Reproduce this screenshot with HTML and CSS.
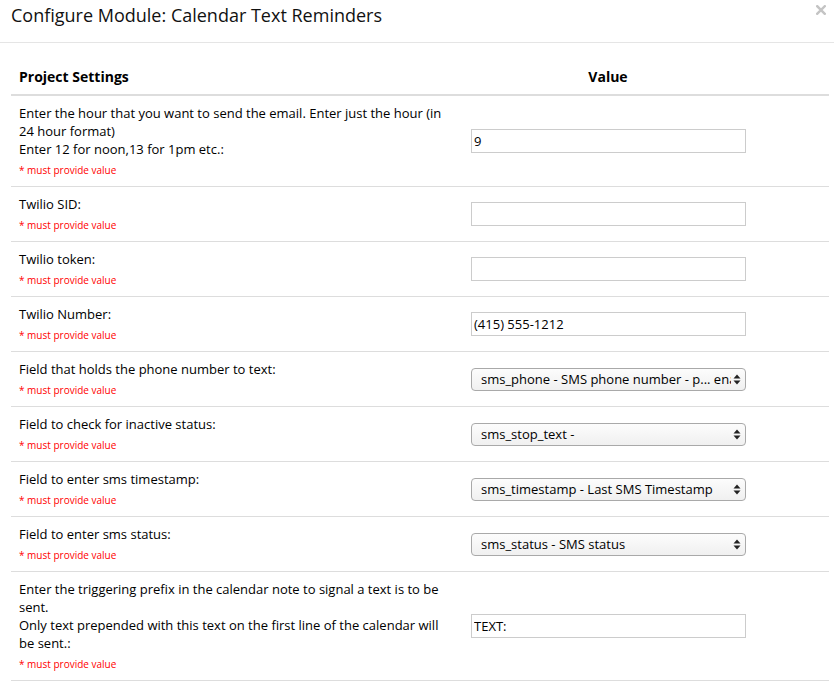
FILE: index.html
```html
<!DOCTYPE html>
<html>
<head>
<meta charset="utf-8">
<link rel="stylesheet" href="styles.css">
</head>
<body>
<div class="modal">
  <div class="modal-header">
    <h4 class="title">Configure Module: Calendar Text Reminders</h4>
    <svg class="close" width="10" height="10" viewBox="0 0 10 10"><path d="M1.2 1.2 L8.8 8.8 M8.8 1.2 L1.2 8.8" stroke="#c4c4c4" stroke-width="2.4" stroke-linecap="square"/></svg>
  </div>
  <div class="modal-body">
    <div class="settings">
      <div class="th">Project Settings</div>
      <div class="th th-value">Value</div>

      <div class="cell label">Enter the hour that you want to send the email. Enter just the hour (in 24 hour format)<br>Enter 12 for noon,13 for 1pm etc.:<div class="req">* must provide value</div></div>
      <div class="cell value"><input class="text" type="text" value="9"></div>

      <div class="cell label">Twilio SID:<div class="req">* must provide value</div></div>
      <div class="cell value"><input class="text" type="text" value=""></div>

      <div class="cell label">Twilio token:<div class="req">* must provide value</div></div>
      <div class="cell value"><input class="text" type="text" value=""></div>

      <div class="cell label">Twilio Number:<div class="req">* must provide value</div></div>
      <div class="cell value"><input class="text" type="text" value="(415) 555-1212"></div>

      <div class="cell label">Field that holds the phone number to text:<div class="req">* must provide value</div></div>
      <div class="cell value"><span class="sel"><select><option>sms_phone - SMS phone number - p... enabled</option></select><svg class="arrows" width="8" height="11" viewBox="0 0 8 11"><path d="M4 0.5 L7.5 4.5 L0.5 4.5 Z M0.5 6.5 L7.5 6.5 L4 10.5 Z" fill="#222"/></svg></span></div>

      <div class="cell label">Field to check for inactive status:<div class="req">* must provide value</div></div>
      <div class="cell value"><span class="sel"><select><option>sms_stop_text - </option></select><svg class="arrows" width="8" height="11" viewBox="0 0 8 11"><path d="M4 0.5 L7.5 4.5 L0.5 4.5 Z M0.5 6.5 L7.5 6.5 L4 10.5 Z" fill="#222"/></svg></span></div>

      <div class="cell label">Field to enter sms timestamp:<div class="req">* must provide value</div></div>
      <div class="cell value"><span class="sel"><select><option>sms_timestamp - Last SMS Timestamp</option></select><svg class="arrows" width="8" height="11" viewBox="0 0 8 11"><path d="M4 0.5 L7.5 4.5 L0.5 4.5 Z M0.5 6.5 L7.5 6.5 L4 10.5 Z" fill="#222"/></svg></span></div>

      <div class="cell label">Field to enter sms status:<div class="req">* must provide value</div></div>
      <div class="cell value"><span class="sel"><select><option>sms_status - SMS status</option></select><svg class="arrows" width="8" height="11" viewBox="0 0 8 11"><path d="M4 0.5 L7.5 4.5 L0.5 4.5 Z M0.5 6.5 L7.5 6.5 L4 10.5 Z" fill="#222"/></svg></span></div>

      <div class="cell label">Enter the triggering prefix in the calendar note to signal a text is to be sent.<br>Only text prepended with this text on the first line of the calendar will be sent.:<div class="req">* must provide value</div></div>
      <div class="cell value"><input class="text" type="text" value="TEXT:"></div>
    </div>
  </div>
</div>
</body>
</html>
```

FILE: styles.css
```css
* { box-sizing: border-box; }
html, body {
  margin: 0;
  padding: 0;
  background: #fff;
}
body {
  font-family: "Open Sans", "Liberation Sans", sans-serif;
  font-size: 13px;
  color: #000;
}
.modal {
  width: 834px;
}
.modal-header {
  height: 43px;
  border-bottom: 1px solid #e5e5e5;
  padding: 3px 11px 0 11px;
  display: flex;
  justify-content: space-between;
  align-items: flex-start;
}
.title {
  margin: 0;
  font-size: 18px;
  font-weight: normal;
  line-height: 24px;
  color: #111;
}
.close {
  display: block;
  margin-top: 2px;
  margin-right: -3px;
}
.modal-body {
  padding: 17px 5px 0 11px;
}
.settings {
  display: grid;
  grid-template-columns: 452px 366px;
}
.th {
  font-weight: bold;
  font-size: 14px;
  line-height: 18px;
  padding: 8px;
  border-bottom: 2px solid #ddd;
}
.th-value {
  text-align: center;
  padding-right: 84px;
}
.cell {
  padding: 8px;
  border-bottom: 1px solid #ddd;
}
.label {
  line-height: 18px;
}
.req {
  color: #f00;
  font-size: 10px;
  line-height: 15px;
  margin-top: 5px;
}
.value {
  display: flex;
  align-items: center;
}
.text {
  width: 275px;
  height: 24px;
  border: 1px solid #ccc;
  padding: 0 2px;
  font-family: "Open Sans", "Liberation Sans", sans-serif;
  font-size: 13px;
  color: #000;
  outline: none;
  background: #fff;
}
.sel {
  position: relative;
  display: inline-block;
  width: 275px;
  height: 23px;
}
.sel select {
  -webkit-appearance: none;
  appearance: none;
  width: 275px;
  height: 23px;
  border: 1px solid #a9a9a9;
  border-radius: 4px;
  background: linear-gradient(#fcfcfc, #f0f0f0);
  padding: 0 14px 0 9px;
  font-family: "Open Sans", "Liberation Sans", sans-serif;
  font-size: 13px;
  color: #000;
  outline: none;
}
.arrows {
  position: absolute;
  right: 5px;
  top: 6px;
}
```
